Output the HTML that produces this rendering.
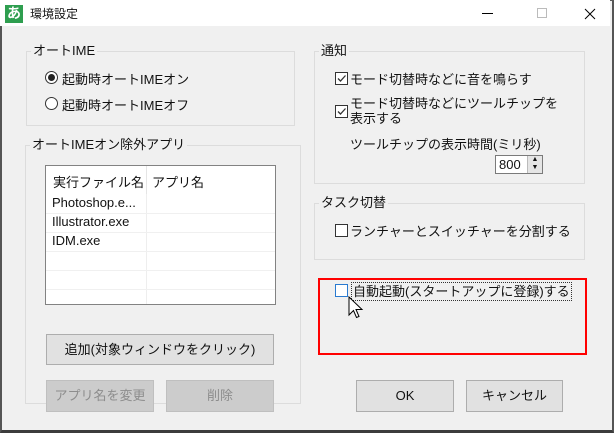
<!DOCTYPE html>
<html><head><meta charset="utf-8"><style>
*{margin:0;padding:0;box-sizing:border-box}
body{width:614px;height:433px;overflow:hidden;background:#f0f0f0;font-family:"Liberation Sans","Noto Sans CJK JP",sans-serif;font-size:13px;color:#111;position:relative}
.win{position:absolute;left:0;top:0;width:614px;height:433px;border:1px solid #5a5a5a;border-bottom:3px solid #3c3c3c;border-left:2px solid #555;border-right:2px solid #555}
.title{position:absolute;left:0;top:0;width:610px;height:26px;background:#fff}
.a{position:absolute}
.grp{position:absolute;border:1px solid #dcdcdc}
.lbl{position:absolute;background:#f0f0f0;padding:0 2px;top:-10px;left:4px;line-height:18px}
.cb{position:absolute;width:13px;height:13px;border:1px solid #333;background:#fff}
.btn{position:absolute;background:#e1e1e1;border:1px solid #adadad;text-align:center;line-height:30px}
.dis{background:#cccccc;border-color:#bfbfbf;color:#8d8d8d}
</style></head><body>
<div class="win"></div>
<div class="title">
 <div class="a" style="left:5px;top:5px;width:18px;height:18px;background:#2e9e4f;color:#fff;font-size:14px;line-height:17px;text-align:center;font-weight:bold">あ</div>
 <div class="a" style="left:30px;top:5px;font-size:12px">環境設定</div>
 <div class="a" style="left:482px;top:13px;width:11px;height:1px;background:#000"></div>
 <div class="a" style="left:537px;top:8px;width:10px;height:10px;border:1px solid #bbb"></div>
 <svg class="a" style="left:584px;top:8px" width="12" height="12"><path d="M1 1L11 11M11 1L1 11" stroke="#000" stroke-width="1"/></svg>
</div>

<div class="grp" style="left:26px;top:51px;width:269px;height:75px"><div class="lbl">オートIME</div></div>
<div class="a" style="left:45px;top:71px;width:13px;height:13px;border:1px solid #333;border-radius:50%;background:#fff"><div style="margin:2px;width:7px;height:7px;border-radius:50%;background:#222"></div></div>
<div class="a" style="left:62px;top:69px">起動時オートIMEオン</div>
<div class="a" style="left:45px;top:97px;width:13px;height:13px;border:1px solid #333;border-radius:50%;background:#fff"></div>
<div class="a" style="left:62px;top:95px">起動時オートIMEオフ</div>

<div class="grp" style="left:25px;top:145px;width:276px;height:259px"><div class="lbl">オートIMEオン除外アプリ</div></div>
<div class="a" style="left:45px;top:165px;width:231px;height:140px;background:#fff;border:1px solid #828282">
 <div class="a" style="left:100px;top:0;width:1px;height:138px;background:#eee"></div>
 <div class="a" style="left:100px;top:0;width:1px;height:28px;background:#e5e5e5"></div>
 <div class="a" style="left:7px;top:6px">実行ファイル名</div>
 <div class="a" style="left:106px;top:6px">アプリ名</div>
 <div class="a" style="left:6px;top:29px">Photoshop.e...</div>
 <div class="a" style="left:6px;top:48px">Illustrator.exe</div>
 <div class="a" style="left:6px;top:67px">IDM.exe</div>
 <div class="a" style="left:0;top:47px;width:229px;height:1px;background:#f0f0f0"></div>
 <div class="a" style="left:0;top:66px;width:229px;height:1px;background:#f0f0f0"></div>
 <div class="a" style="left:0;top:85px;width:229px;height:1px;background:#f0f0f0"></div>
 <div class="a" style="left:0;top:104px;width:229px;height:1px;background:#f0f0f0"></div>
 <div class="a" style="left:0;top:123px;width:229px;height:1px;background:#f0f0f0"></div>
</div>
<div class="btn" style="left:46px;top:334px;width:228px;height:31px">追加(対象ウィンドウをクリック)</div>
<div class="btn dis" style="left:46px;top:380px;width:108px;height:32px">アプリ名を変更</div>
<div class="btn dis" style="left:166px;top:380px;width:108px;height:32px">削除</div>

<div class="grp" style="left:314px;top:51px;width:271px;height:133px"><div class="lbl">通知</div></div>
<div class="cb" style="left:335px;top:72px"><svg width="11" height="11" style="position:absolute;left:0;top:0"><path d="M2 5.5l2.5 2.5 5-5.5" stroke="#333" stroke-width="1.3" fill="none"/></svg></div>
<div class="a" style="left:350px;top:69px">モード切替時などに音を鳴らす</div>
<div class="cb" style="left:335px;top:105px"><svg width="11" height="11" style="position:absolute;left:0;top:0"><path d="M2 5.5l2.5 2.5 5-5.5" stroke="#333" stroke-width="1.3" fill="none"/></svg></div>
<div class="a" style="left:350px;top:96px;line-height:15px">モード切替時などにツールチップを<br>表示する</div>
<div class="a" style="left:350px;top:134px">ツールチップの表示時間(ミリ秒)</div>
<div class="a" style="left:495px;top:155px;width:48px;height:19px;background:#fff;border:1px solid #7a7a7a">
 <div class="a" style="left:3px;top:0;line-height:17px">800</div>
 <div class="a" style="left:31px;top:0;width:15px;height:17px;background:#e5e5e5;border-left:1px solid #bbb;font-size:7px;line-height:8px;text-align:center">▲<br>▼</div>
</div>

<div class="grp" style="left:314px;top:203px;width:271px;height:57px"><div class="lbl">タスク切替</div></div>
<div class="cb" style="left:335px;top:224px"></div>
<div class="a" style="left:350px;top:221px">ランチャーとスイッチャーを分割する</div>

<div class="a" style="left:318px;top:278px;width:269px;height:77px;border:2px solid #f00"></div>
<div class="cb" style="left:335px;top:284px;border-color:#2a7ad0"></div>
<div class="a" style="left:351px;top:282px;border:1px dotted #333;padding:0 1px;line-height:17px">自動起動(スタートアップに登録)する</div>
<svg class="a" style="left:348px;top:296px" width="16" height="24"><path d="M1 1v18l4.5-4.5 3 7 2.5-1-3-7h6z" fill="#fff" stroke="#000" stroke-width="1"/></svg>

<div class="btn" style="left:356px;top:380px;width:98px;height:32px">OK</div>
<div class="btn" style="left:466px;top:380px;width:97px;height:32px">キャンセル</div>
</body></html>
